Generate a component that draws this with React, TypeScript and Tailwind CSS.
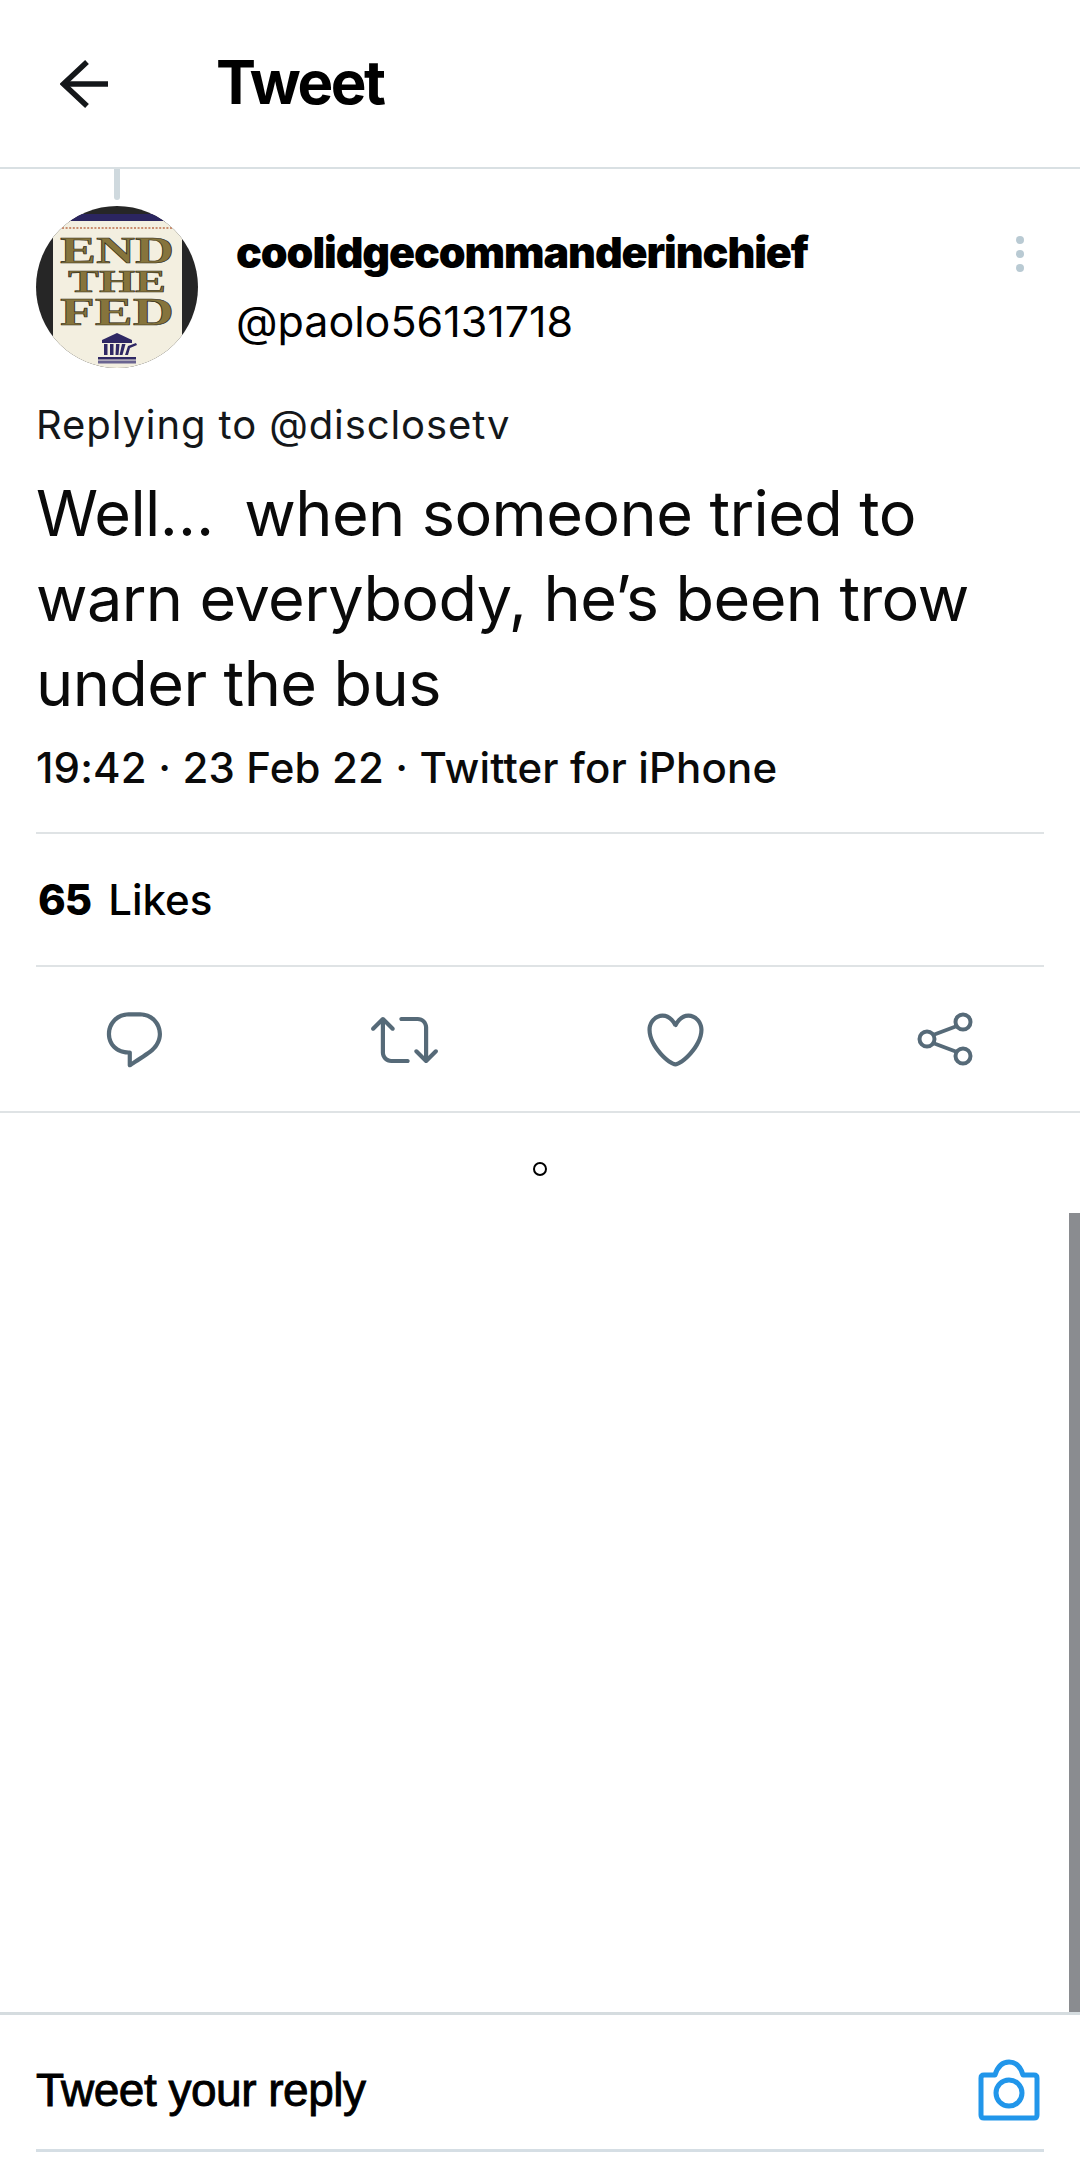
function Icon({ d, className }: { d: string; className: string }) {
  return (
    <svg viewBox="0 0 24 24" className={className} fill="currentColor">
      <path d={d} />
    </svg>
  );
}

const reply =
  "M14.046 2.242l-4.148-.01h-.002c-4.374 0-7.8 3.427-7.8 7.802 0 4.098 3.186 7.206 7.465 7.37v3.828c0 .108.044.286.12.403.142.225.384.347.632.347.138 0 .277-.038.402-.118.264-.168 6.473-4.14 8.088-5.506 1.902-1.61 3.04-3.97 3.043-6.312v-.017c-.006-4.367-3.43-7.787-7.8-7.788zm3.787 12.972c-1.134.96-4.862 3.405-6.772 4.643V16.67c0-.414-.335-.75-.75-.75h-.396c-3.66 0-6.318-2.476-6.318-5.886 0-3.534 2.768-6.302 6.3-6.302l4.147.01h.002c3.532 0 6.3 2.766 6.302 6.296-.003 1.91-.942 3.844-2.514 5.176z";
const retweet =
  "M23.77 15.67c-.292-.293-.767-.293-1.06 0l-2.22 2.22V7.65c0-2.068-1.683-3.75-3.75-3.75h-5.85c-.414 0-.75.336-.75.75s.336.75.75.75h5.85c1.24 0 2.25 1.01 2.25 2.25v10.24l-2.22-2.22c-.293-.293-.768-.293-1.06 0s-.294.768 0 1.06l3.5 3.5c.145.147.337.22.53.22s.383-.072.53-.22l3.5-3.5c.294-.292.294-.767 0-1.06zm-10.66 3.28H7.26c-1.24 0-2.25-1.01-2.25-2.25V6.46l2.22 2.22c.148.147.34.22.532.22s.384-.073.53-.22c.293-.293.293-.768 0-1.06l-3.5-3.5c-.293-.294-.768-.294-1.06 0l-3.5 3.5c-.294.292-.294.767 0 1.06s.767.293 1.06 0l2.22-2.22V16.7c0 2.068 1.683 3.75 3.75 3.75h5.85c.414 0 .75-.336.75-.75s-.337-.75-.75-.75z";
const heart =
  "M12 21.638h-.014C9.403 21.59 1.95 14.856 1.95 8.478c0-3.064 2.525-5.754 5.403-5.754 2.29 0 3.83 1.58 4.646 2.73.814-1.148 2.354-2.73 4.645-2.73 2.88 0 5.404 2.69 5.404 5.755 0 6.376-7.454 13.11-10.037 13.157H12zM7.354 4.225c-2.08 0-3.903 1.988-3.903 4.255 0 5.74 7.034 11.596 8.55 11.658 1.518-.062 8.55-5.917 8.55-11.658 0-2.267-1.823-4.255-3.903-4.255-2.528 0-3.94 2.936-3.952 2.965-.23.562-1.156.562-1.387 0-.014-.03-1.425-2.965-3.954-2.965z";

function Avatar() {
  const serif = '"Liberation Serif", serif';
  return (
    <svg viewBox="0 0 162 162" className="w-[162px] h-[162px] shrink-0">
      <defs>
        <clipPath id="av">
          <circle cx="81" cy="81" r="81" />
        </clipPath>
      </defs>
      <g clipPath="url(#av)">
        <rect width="162" height="162" fill="#262626" />
        <rect x="0" y="8" width="162" height="8" fill="#2b2560" />
        <rect x="17" y="15" width="129" height="147" fill="#f3efe0" />
        <line x1="26" y1="22" x2="136" y2="22" stroke="#c98e70" strokeWidth="2" strokeDasharray="2 1.6" />
        <g fontFamily={serif} fontWeight="700" fill="#86743c" stroke="#2e2a1a" strokeWidth="0.6" textAnchor="middle">
          <text x="81" y="57" fontSize="38" textLength="114" lengthAdjust="spacingAndGlyphs">END</text>
          <text x="81" y="86" fontSize="31" textLength="98" lengthAdjust="spacingAndGlyphs">THE</text>
          <text x="81" y="119" fontSize="39" textLength="114" lengthAdjust="spacingAndGlyphs">FED</text>
        </g>
        <g fill="#2f2864">
          <path d="M66 134 L81 127 L96 134 L96 137 L66 137 Z" />
          <rect x="68" y="138" width="3.500" height="11" />
          <rect x="74" y="138" width="3.500" height="11" />
          <path d="M80 138h3.500l-1 11h-3z" />
          <path d="M86 138h3.500l-3 11h-3z" />
          <path d="M92 140l8-3 1 2-7 3-2 7h-3z" />
          <rect x="62" y="151" width="38" height="2.500" />
          <rect x="62" y="154.500" width="38" height="3" fill="#6a6490" />
        </g>
      </g>
    </svg>
  );
}

export default function App() {
  return (
    <div className="relative h-[2168px] w-[1080px] flex flex-col bg-white text-black overflow-hidden font-['Inter',sans-serif]">
      <header className="h-[169px] shrink-0 flex items-center border-b-2 border-[#d9e0e3] pl-[60px]">
        <svg viewBox="0 0 52 50" className="w-[52px] h-[50px]" fill="none" stroke="#14171a" strokeWidth="5.500">
          <path d="M4 25 H48" />
          <path d="M27 3 L3.500 25 L27 47" />
        </svg>
        <h1 className="ml-[104px] mb-[3px] text-[60px] leading-none font-bold tracking-[-2.500px]">Tweet</h1>
      </header>

      <section className="shrink-0 px-[36px] relative">
        <div className="absolute left-[114px] top-0 w-[6px] h-[31px] rounded-b bg-[#cfd9de]" />
        <div className="flex items-center pt-[37px]">
          <Avatar />
          <div className="ml-[38px] flex-1 min-w-0 mb-[2px]">
            <div className="text-[43px] leading-[70px] font-black tracking-[-1.100px]">coolidgecommanderinchief</div>
            <div className="text-[43px] leading-[68px] tracking-[0px]">@paolo56131718</div>
          </div>
          <div className="flex flex-col gap-[6px] mr-[20px] mb-[66px]">
            <span className="w-[8px] h-[8px] rounded-full bg-[#b9cad3]" />
            <span className="w-[8px] h-[8px] rounded-full bg-[#b9cad3]" />
            <span className="w-[8px] h-[8px] rounded-full bg-[#b9cad3]" />
          </div>
        </div>
        <div className="mt-[29px] text-[40px] leading-[56px] tracking-[0.9px] text-[#14171a]">Replying to @disclosetv</div>
        <p className="mt-[18px] text-[63px] leading-[85px] tracking-[-0.6px] text-[#0a0a0a]">
          Well<span className="tracking-[13px]">…</span> when someone tried to
          <br />
          warn everybody, he’s been trow
          <br />
          under the bus
        </p>
        <div className="mt-[14px] text-[42px] leading-[56px] font-medium tracking-[0.15px] text-[#0a0a0a] pb-[36px]">
          19:42 · 23 Feb 22 · Twitter for iPhone
        </div>
      </section>

      <div className="mx-[36px] h-[2px] bg-[#dfe3e5] shrink-0" />
      <div className="mx-[36px] h-[131px] flex items-center gap-[17px] text-[42px] shrink-0 pl-[2px]">
        <b className="font-extrabold tracking-[-1px]">65</b>
        <span className="font-medium tracking-[0px]">Likes</span>
      </div>
      <div className="mx-[36px] h-[2px] bg-[#dfe3e5] shrink-0" />

      <div className="h-[146px] shrink-0 border-b-2 border-[#dfe3e5] flex items-center text-[#566a78] pl-[101px] pr-[102px] justify-between">
        <Icon d={reply} className="w-[67px] h-[67px]" />
        <Icon d={retweet} className="w-[67px] h-[67px]" />
        <Icon d={heart} className="w-[67px] h-[67px]" />
        <svg viewBox="0 0 66 66" className="w-[66px] h-[66px]" fill="none" stroke="currentColor" strokeWidth="4">
          <circle cx="51" cy="16" r="7.500" />
          <circle cx="15" cy="33" r="7.500" />
          <circle cx="51" cy="50" r="7.500" />
          <path d="M21 29 L45 20 M21 37 L45 46" />
        </svg>
      </div>

      <div className="flex-1 flex justify-center pt-[49px]">
        <span className="w-[14px] h-[14px] rounded-full border-2 border-black" />
      </div>

      <footer className="shrink-0 h-[156px] border-t-[3px] border-[#d5dcdf] px-[36px]">
        <div className="h-[137px] flex items-center justify-between border-b-[3px] border-[#d5dee4] pt-[16px]">
          <span className="font-['Liberation_Sans',sans-serif] text-[46px] tracking-[-0.5px] [-webkit-text-stroke:0.9px_black]">Tweet your reply</span>
          <svg viewBox="0 0 62 62" className="w-[62px] h-[62px] mr-[4px]" fill="none" stroke="#2196ea" strokeWidth="5">
            <path d="M6 16 H17 C20 6 25 3 31 3 C37 3 42 6 45 16 H56 C58 16 59 17 59 19 V56 C59 58 58 59 56 59 H6 C4 59 3 58 3 56 V19 C3 17 4 16 6 16 Z" strokeLinejoin="round" />
            <circle cx="31" cy="34" r="13" />
          </svg>
        </div>
      </footer>

      <div className="absolute right-0 top-[1213px] w-[11px] h-[799px] bg-[#8a8c90]" />
    </div>
  );
}
